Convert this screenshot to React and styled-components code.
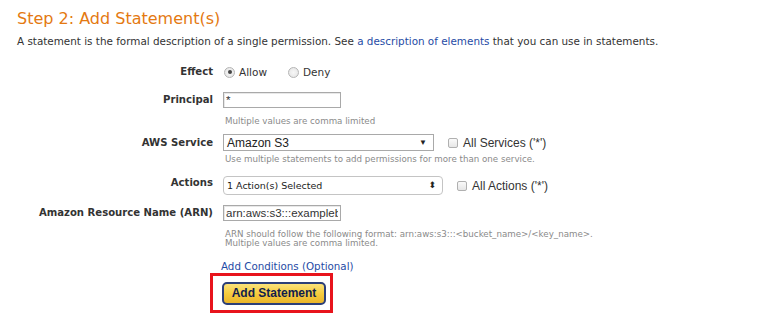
import React from "react";
import styled, { createGlobalStyle } from "styled-components";

const GlobalStyle = createGlobalStyle`
  html, body {
    margin: 0;
    padding: 0;
    background: #ffffff;
  }
  body {
    font-family: "DejaVu Sans", Verdana, sans-serif;
    color: #333333;
  }
`;

const Page = styled.div`
  width: 770px;
  height: 329px;
  padding: 9px 0 0 17px;
  box-sizing: border-box;
  overflow: hidden;
`;

const Title = styled.h2`
  margin: 0;
  font-family: "DejaVu Sans", Verdana, sans-serif;
  font-weight: normal;
  font-size: 16px;
  line-height: 20px;
  color: #e47911;
`;

const Intro = styled.p`
  margin: 5px 0 0;
  font-size: 10.4px;
  line-height: 14px;
  color: #333;
`;

const Link = styled.a`
  color: #1f4ba5;
  text-decoration: none;
`;

const Form = styled.div`
  display: flex;
  flex-direction: column;
  margin-top: 16px;
`;

const Row = styled.div`
  display: flex;
  align-items: flex-start;
  margin-top: ${(p) => p.gap || 0}px;
`;

const Label = styled.div`
  width: 196px;
  flex: none;
  text-align: right;
  font-weight: bold;
  font-size: 10.1px;
  line-height: ${(p) => p.h || 16}px;
  padding-right: 10px;
  box-sizing: content-box;
`;

const Field = styled.div`
  display: flex;
  flex-direction: column;
`;

const Line = styled.div`
  display: flex;
  align-items: center;
  height: ${(p) => p.h || 16}px;
`;

const Radio = styled.span`
  width: 9px;
  height: 9px;
  border-radius: 50%;
  border: 1px solid #b5b5b5;
  background: radial-gradient(circle, #f7f7f7 0%, #e2e2e2 100%);
  display: inline-flex;
  align-items: center;
  justify-content: center;
  margin: 0 4px 0 1px;
  &::after {
    content: "";
    display: ${(p) => (p.checked ? "block" : "none")};
    width: 4px;
    height: 4px;
    border-radius: 50%;
    background: #444;
  }
`;

const Option = styled.span`
  display: inline-flex;
  align-items: center;
  font-size: 10.5px;
  color: #333;
  margin-right: ${(p) => p.mr || 0}px;
`;

const TextInput = styled.input`
  width: 118px;
  height: 16px;
  box-sizing: border-box;
  border: 1px solid #a9a9a9;
  box-shadow: inset 1px 1px 0 #e8e8e8;
  font-family: "Liberation Sans", Arial, sans-serif;
  font-size: 11.5px;
  padding: 0 2px;
  margin: 0;
  color: #333;
  outline: none;
`;

const Select = styled.div`
  width: ${(p) => p.w}px;
  height: ${(p) => p.h}px;
  box-sizing: border-box;
  border: 1px solid ${(p) => (p.round ? "#c4c4c4" : "#a9a9a9")};
  border-radius: ${(p) => (p.round ? 4 : 0)}px;
  background: #fff;
  display: flex;
  align-items: center;
  justify-content: space-between;
  padding: 0 6px 0 3px;
  font-family: ${(p) =>
    p.round ? `"DejaVu Sans", Verdana, sans-serif` : `"Liberation Sans", Arial, sans-serif`};
  font-size: ${(p) => (p.round ? 9.5 : 12)}px;
  color: #222;
`;

const Arrow = styled.span`
  font-size: ${(p) => p.size || 8}px;
  color: #222;
  line-height: 1;
`;

const Check = styled.span`
  display: inline-flex;
  align-items: center;
  margin-left: ${(p) => p.ml}px;
  font-family: "Liberation Sans", Arial, sans-serif;
  font-size: 12px;
  color: #333;
  &::before {
    content: "";
    width: 8px;
    height: 8px;
    border: 1px solid #b0b0b0;
    border-radius: 2px;
    background: linear-gradient(#fafafa, #e6e6e6);
    margin-right: 5px;
  }
`;

const Hint = styled.div`
  font-size: 8.7px;
  line-height: 9px;
  color: #8a8a8a;
  margin: ${(p) => p.mt || 0}px 0 0 2px;
  white-space: nowrap;
`;

const Conditions = styled.div`
  margin: 11px 0 0 204px;
  font-size: 10.3px;
  line-height: 14px;
`;

const Highlight = styled.div`
  margin: 0 0 0 193px;
  width: 123px;
  height: 40px;
  box-sizing: border-box;
  border: 3px solid #e8141c;
  display: flex;
  align-items: center;
  justify-content: center;
  padding-left: 5px;
`;

const Button = styled.button`
  width: 104px;
  height: 23px;
  box-sizing: border-box;
  border: 2px solid #2c3f78;
  border-radius: 5px;
  background: linear-gradient(#fbe27a 0%, #f6cc3f 50%, #eab52a 100%);
  font-family: "Liberation Sans", Arial, sans-serif;
  font-weight: bold;
  font-size: 12px;
  color: #111d4d;
  padding: 0;
  cursor: pointer;
`;

export default function App() {
  return (
    <>
      <GlobalStyle />
      <Page>
        <Title>Step 2: Add Statement(s)</Title>
        <Intro>
          A statement is the formal description of a single permission. See{" "}
          <Link href="#">a description of elements</Link> that you can use in statements.
        </Intro>

        <Form>
          <Row>
            <Label>Effect</Label>
            <Line>
              <Option mr={20}>
                <Radio checked />
                Allow
              </Option>
              <Option>
                <Radio />
                Deny
              </Option>
            </Line>
          </Row>

          <Row gap={12}>
            <Label>Principal</Label>
            <Field>
              <TextInput readOnly value="*" />
              <Hint mt={9}>Multiple values are comma limited</Hint>
            </Field>
          </Row>

          <Row gap={8}>
            <Label h={17}>AWS Service</Label>
            <Field>
              <Line h={17}>
                <Select w={211} h={17}>
                  Amazon S3
                  <Arrow>▼</Arrow>
                </Select>
                <Check ml={14}>All Services ('*')</Check>
              </Line>
              <Hint mt={4}>Use multiple statements to add permissions for more than one service.</Hint>
            </Field>
          </Row>

          <Row gap={12}>
            <Label h={14}>Actions</Label>
            <Line h={19}>
              <Select w={220} h={19} round>
                1 Action(s) Selected
                <Arrow size={9}>⬍</Arrow>
              </Select>
              <Check ml={14}>All Actions ('*')</Check>
            </Line>
          </Row>

          <Row gap={10}>
            <Label>Amazon Resource Name (ARN)</Label>
            <Field>
              <TextInput readOnly value="arn:aws:s3:::examplebucket" />
              <Hint mt={9}>
                ARN should follow the following format: arn:aws:s3:::&lt;bucket_name&gt;/&lt;key_name&gt;.
                <br />
                Multiple values are comma limited.
              </Hint>
            </Field>
          </Row>
        </Form>

        <Conditions>
          <Link href="#">Add Conditions (Optional)</Link>
        </Conditions>

        <Highlight>
          <Button>Add Statement</Button>
        </Highlight>
      </Page>
    </>
  );
}
